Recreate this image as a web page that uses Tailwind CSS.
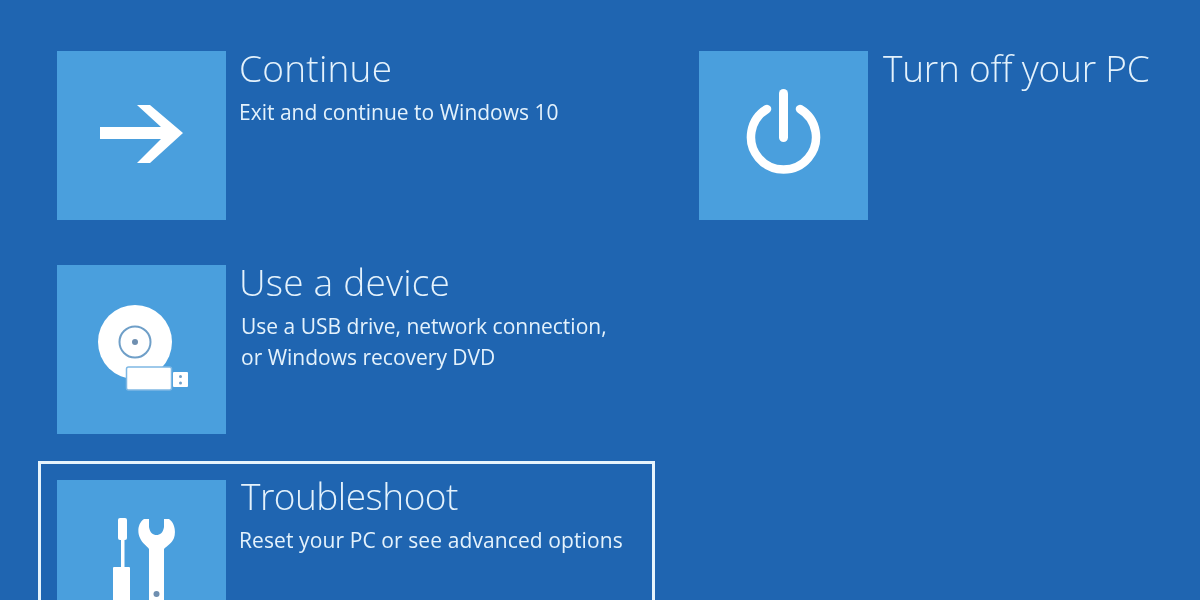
<!DOCTYPE html>
<html>
<head>
<meta charset="utf-8">
<script src="https://cdn.jsdelivr.net/npm/@tailwindcss/browser@4"></script>
</head>
<body class="m-0 bg-[#1f65b1]">
<div class="w-[1200px] h-[600px] overflow-hidden bg-[#1f65b1] flex text-[#e4f2fc] blur-[0.4px] font-['Open_Sans','Noto_Sans',sans-serif]">
  <div class="w-[661px] pl-[38px] pt-[51px] shrink-0">
    <div class="flex pl-[19px]">
      <div class="w-[169px] h-[169px] bg-[#4a9fdd] shrink-0">
        <svg class="w-full h-full" viewBox="0 0 169 169" fill="#fff"><polygon points="43,76 104,76 80,54 93,54 126,82 93,112 80,112 104,88 43,88"/></svg>
      </div>
      <div class="ml-[13px]">
        <div class="text-[37px] leading-[36px] font-light tracking-[0.25px] -mt-[1px]">Continue</div>
        <div class="text-[21px] leading-[24px] font-normal mt-[14px]">Exit and continue to Windows 10</div>
      </div>
    </div>
    <div class="flex pl-[19px] mt-[45px]">
      <div class="w-[169px] h-[169px] bg-[#4a9fdd] shrink-0">
        <svg class="w-full h-full" viewBox="0 0 169 169"><circle cx="78" cy="77" r="37" fill="#fff"/><circle cx="78" cy="77" r="15.500" fill="none" stroke="#6f9fc8" stroke-width="2"/><circle cx="78" cy="77" r="3" fill="#6f8fb0"/><rect x="69.500" y="102" width="45" height="23" rx="2" fill="#fff" stroke="#7fb8e4" stroke-width="1.500"/><rect x="116" y="107" width="15" height="15" rx="1" fill="#fff"/><circle cx="123.500" cy="111.500" r="1.500" fill="#6f9fc8"/><circle cx="123.500" cy="118" r="1.500" fill="#6f9fc8"/></svg>
      </div>
      <div class="ml-[13px]">
        <div class="text-[37px] leading-[36px] font-light tracking-[0.2px] -mt-[1px]">Use a device</div>
        <div class="text-[21px] leading-[31px] font-normal mt-[11px] ml-[2px]">Use a USB drive, network connection,<br>or Windows recovery DVD</div>
      </div>
    </div>
    <div class="flex w-[617px] h-[200px] mt-[27px] border-[3px] border-[#e6f4fd] pl-[16px] pt-[16px]">
      <div class="w-[169px] h-[169px] bg-[#4a9fdd] shrink-0">
        <svg class="w-full h-full" viewBox="0 0 169 169" fill="#fff"><rect x="61" y="38" width="9" height="22" rx="2"/><rect x="64" y="55" width="3.500" height="35"/><rect x="56" y="87" width="17" height="60" rx="1"/><path d="M87 39 C 81 43 80 52 83 58 C 85 63 90 66 92 69 L92 147 L107 147 L107 69 C 110 66 115 63 117 58 C 119 52 118 43 112 39 L107 39 L107 47 C 106 53 103 55 99.500 55 C 96 55 93 53 92 47 L92 39 Z"/><circle cx="99.500" cy="114" r="3" fill="#6f8fb0"/></svg>
      </div>
      <div class="ml-[14px] flex-1">
        <div class="text-[37px] leading-[36px] font-light ml-[1px] tracking-[-0.5px] -mt-[2px]">Troubleshoot</div>
        <div class="text-[21px] leading-[24px] font-normal mt-[14px] -ml-[1px] tracking-[0.1px]">Reset your PC or see advanced options</div>
      </div>
    </div>
  </div>
  <div class="pl-[38px] pt-[51px] flex">
    <div class="w-[169px] h-[169px] bg-[#4a9fdd] shrink-0">
      <svg class="w-full h-full" viewBox="0 0 169 169" fill="none" stroke="#fff" stroke-linecap="round"><path d="M68 58 A 32.500 32.500 0 1 0 101 58" stroke-width="8.500"/><path d="M84.500 42.500 L84.500 86.500" stroke-width="9"/></svg>
    </div>
    <div class="ml-[15px] -mt-[1px] text-[37px] leading-[36px] font-light tracking-[-0.2px] whitespace-nowrap">Turn off your PC</div>
  </div>
</div>
</body>
</html>
